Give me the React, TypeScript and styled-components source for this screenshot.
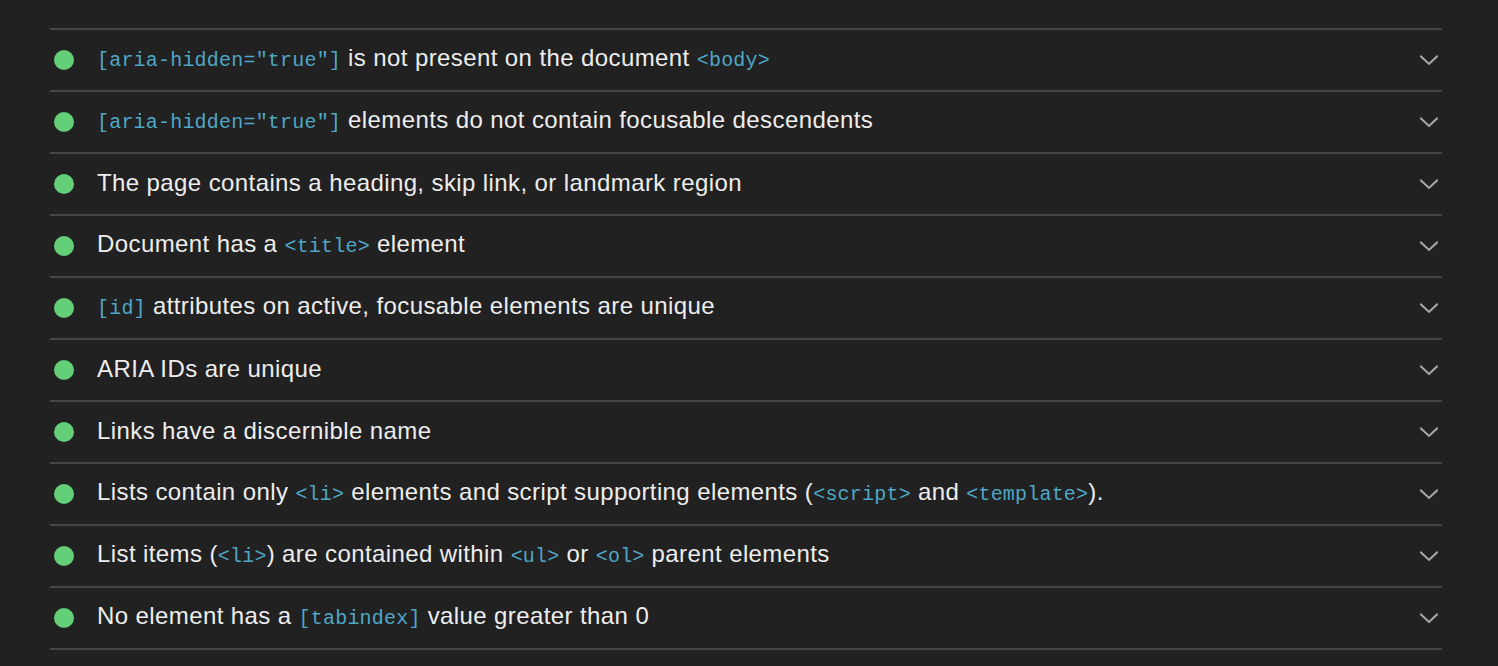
import React from "react";
import styled, { createGlobalStyle } from "styled-components";

const GlobalStyle = createGlobalStyle`
  html, body {
    margin: 0;
    padding: 0;
    background: #212121;
  }
  body {
    font-family: "Liberation Sans", Arial, sans-serif;
  }
`;

const Page = styled.div`
  width: 1498px;
  height: 666px;
  background: #212121;
  padding: 28px 56px 0 50px;
  box-sizing: border-box;
  overflow: hidden;
`;

const List = styled.div`
  display: flex;
  flex-direction: column;
  border-top: 2px solid #464646;
`;

const Row = styled.div`
  display: flex;
  align-items: center;
  height: 60px;
  border-bottom: 2px solid #464646;
  padding: 0 4px 0 4px;
`;

const Dot = styled.span`
  flex: none;
  width: 20px;
  height: 20px;
  border-radius: 50%;
  background: #63cf78;
`;

const Title = styled.div`
  flex: 1;
  margin-left: 23px;
  font-size: 24px;
  letter-spacing: 0.4px;
  color: #ededed;
  white-space: nowrap;
  line-height: 1;
  padding-bottom: 3px;
`;

const Code = styled.code`
  font-family: "Liberation Mono", "Courier New", monospace;
  font-size: 20px;
  letter-spacing: 0.2px;
  color: #4fa7c6;
`;

const Chevron = () => (
  <svg width="18" height="11" viewBox="0 0 18 11" fill="none">
    <path
      d="M1 1.5 L9 9 L17 1.5"
      stroke="#a8a8a8"
      strokeWidth="2"
      strokeLinecap="square"
    />
  </svg>
);

type Part = string | { code: string };

const audits: Part[][] = [
  [{ code: '[aria-hidden="true"]' }, " is not present on the document ", { code: "<body>" }],
  [{ code: '[aria-hidden="true"]' }, " elements do not contain focusable descendents"],
  ["The page contains a heading, skip link, or landmark region"],
  ["Document has a ", { code: "<title>" }, " element"],
  [{ code: "[id]" }, " attributes on active, focusable elements are unique"],
  ["ARIA IDs are unique"],
  ["Links have a discernible name"],
  [
    "Lists contain only ",
    { code: "<li>" },
    " elements and script supporting elements (",
    { code: "<script>" },
    " and ",
    { code: "<template>" },
    ").",
  ],
  ["List items (", { code: "<li>" }, ") are contained within ", { code: "<ul>" }, " or ", { code: "<ol>" }, " parent elements"],
  ["No element has a ", { code: "[tabindex]" }, " value greater than 0"],
];

const App = () => (
  <>
    <GlobalStyle />
    <Page>
      <List>
        {audits.map((parts, i) => (
          <Row key={i}>
            <Dot />
            <Title>
              {parts.map((p, j) =>
                typeof p === "string" ? (
                  <React.Fragment key={j}>{p}</React.Fragment>
                ) : (
                  <Code key={j}>{p.code}</Code>
                )
              )}
            </Title>
            <Chevron />
          </Row>
        ))}
      </List>
    </Page>
  </>
);

export default App;
